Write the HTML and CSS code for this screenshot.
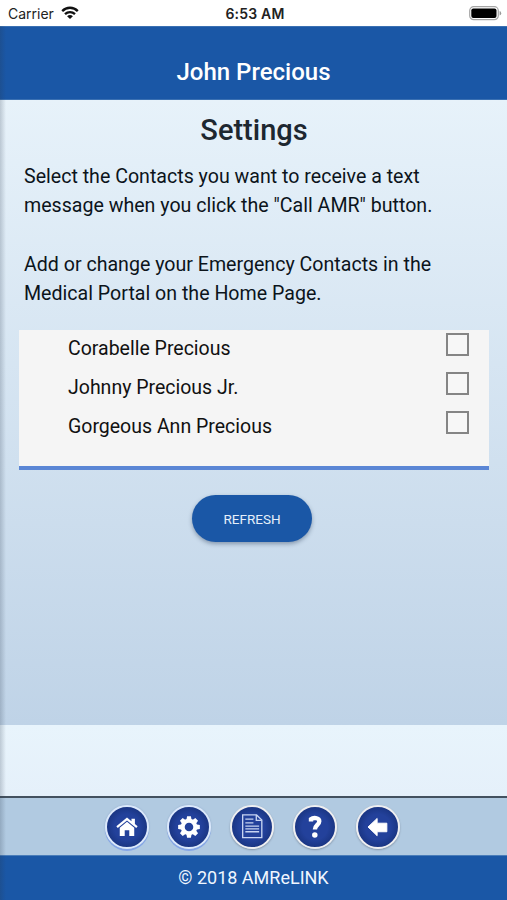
FILE: index.html
```html
<!DOCTYPE html>
<html lang="en">
<head>
<meta charset="utf-8">
<title>Settings</title>
<link rel="stylesheet" href="styles.css">
</head>
<body>
<div class="screen">
  <div class="status">
    <div class="carrier"><span>Carrier</span>
      <svg class="wifi" width="18" height="14" viewBox="0 0 18 14" fill="none" stroke="#111" stroke-width="2.3"><path d="M1.2 5.1C5.6.6 12.4.6 16.8 5.1"/><path d="M4 8.2c2.9-2.8 7.1-2.8 10 0"/><path d="M9 13 6.1 10.2c1.7-1.5 4.1-1.5 5.8 0z" fill="#111" stroke="none"/></svg>
    </div>
    <div class="time">6:53 AM</div>
    <svg class="battery" width="33" height="15" viewBox="0 0 33 15"><rect x=".7" y=".7" width="28.6" height="13" rx="4" fill="#fff" stroke="#a5a5a5" stroke-width="1.2"/><rect x="2.3" y="2.5" width="25.2" height="9.6" rx="2" fill="#000"/><path d="M30.6 5v4.6q1.6-.6 1.6-2.3T30.6 5z" fill="#999"/></svg>
  </div>
  <header class="titlebar"><span>John Precious</span></header>
  <main class="content">
    <h1>Settings</h1>
    <div class="intro">
      <p>Select the Contacts you want to receive a text<br>message when you click the "Call AMR" button.</p>
      <p>Add or change your Emergency Contacts in the<br>Medical Portal on the Home Page.</p>
    </div>
    <div class="contacts">
      <label class="contact"><span>Corabelle Precious</span><input type="checkbox"></label>
      <label class="contact"><span>Johnny Precious Jr.</span><input type="checkbox"></label>
      <label class="contact"><span>Gorgeous Ann Precious</span><input type="checkbox"></label>
    </div>
    <button class="refresh">REFRESH</button>
  </main>
  <div class="spacer"></div>
  <nav class="nav">
    <a class="round blue"><svg viewBox="0 0 42 42"><path fill="#fff" d="M9.8 20.3 21 11l4.7 3.9v-2.6h3.6v5.6l2.9 2.4-1.5 1.8L21 14.1l-9.7 8z"/><path fill="#fff" d="M13.4 21.7 21 15.5l7.6 6.2v8.8h-5.2v-6h-4.8v6h-5.2z"/></svg></a>
    <a class="round blue"><svg viewBox="0 0 42 42"><g fill="#fff" transform="translate(21 21)"><g id="teeth"><path d="M-2.8-7-2-11.4h4L2.8-7zM-2.8 7-2 11.4h4L2.8 7z"/><path transform="rotate(45)" d="M-2.8-7-2-11.4h4L2.8-7zM-2.8 7-2 11.4h4L2.8 7z"/><path transform="rotate(90)" d="M-2.8-7-2-11.4h4L2.8-7zM-2.8 7-2 11.4h4L2.8 7z"/><path transform="rotate(135)" d="M-2.8-7-2-11.4h4L2.8-7zM-2.8 7-2 11.4h4L2.8 7z"/></g><circle r="6.6" fill="none" stroke="#fff" stroke-width="4.2"/></g></svg></a>
    <a class="round"><svg viewBox="0 0 42 42" fill="none" stroke="#c8d4f2" stroke-width="1.4"><path d="M11.2 8.3h14.6l5.5 5.5v18.4H11.2z"/><path d="M25.5 8.5v5.6h5.6M14 12.8h8.5M14 16.7h8.5M14 20h14.5M14 23h14.5M14 26h14.5"/></svg></a>
    <a class="round"><svg viewBox="0 0 42 42" fill="none"><path d="M16.8 15.2v-2.5c2.2-1.8 8.7-1.8 8.7 2.3 0 3.8-4.6 3.9-4.6 8.7" stroke="#fff" stroke-width="4.6"/><circle cx="20.8" cy="29.3" r="2.9" fill="#fff"/></svg></a>
    <a class="round"><svg viewBox="0 0 42 42"><path fill="#fff" stroke="#fff" stroke-linejoin="round" d="m10.5 21 9.6-9v5h10.2v9H20.1v4.2z"/></svg></a>
  </nav>
  <footer class="footer">© 2018 AMReLINK</footer>
  <div class="edge"></div>
</div>
</body>
</html>
```

FILE: styles.css
```css
* { box-sizing: border-box; }
body { margin: 0; font-family: Roboto, sans-serif; }
.screen { position: relative; width: 507px; height: 900px; display: flex; flex-direction: column; overflow: hidden; background: #e8f3fb; }
.status { height: 26px; flex: none; display: grid; grid-template-columns: 1fr auto 1fr; align-items: center; padding: 1px 5px 0 8px; background: #fff; color: #222; font-family: Inter, sans-serif; font-size: 14px; }
.carrier { display: flex; align-items: center; gap: 7px; }
.wifi { margin-top: -2px; }
.time { font-weight: 600; letter-spacing: .2px; }
.battery { justify-self: end; }
.titlebar { height: 74px; flex: none; display: flex; align-items: flex-end; justify-content: center; padding-bottom: 13px; background: #1a57a6; border-top: 1px solid #3a70b2; border-bottom: 1px solid #3a70b2; color: #fff; font-size: 24px; font-weight: 500; line-height: 28px; }
.content { height: 625px; flex: none; display: flex; flex-direction: column; align-items: center; padding: 12px 18px 0 19px; background: linear-gradient(#e7f2fa, #bfd3e7); }
h1 { margin: 0; font-size: 29px; line-height: 36px; font-weight: 500; color: #1d2730; }
.intro { align-self: stretch; padding: 14px 0 0 5px; font-size: 19.6px; line-height: 29.3px; color: #0c141b; white-space: nowrap; }
.intro p { margin: 0 0 29.3px; }
.intro p:last-child { margin-bottom: 0; }
.contacts { align-self: stretch; height: 140px; margin-top: 22px; padding: 0 20px 0 49px; background: #f5f5f5; border-bottom: 4px solid #5b86d5; }
.contact { display: flex; justify-content: space-between; height: 39px; font-size: 19.5px; line-height: 37px; color: #111; }
.contact input { appearance: none; width: 23px; height: 23px; margin: 3px 0 0; border: 2px solid #858585; background: #f7f7f7; }
.refresh { width: 120px; height: 47px; margin: 25px 0 0 -4px; padding: 0; border: 0; border-radius: 24px; background: #1a57a6; color: #e6effa; font: 13.5px Roboto, sans-serif; box-shadow: 0 2px 4px rgba(30, 50, 80, .4); }
.spacer { height: 71px; flex: none; background: linear-gradient(#e8f4fc, #e5f0fa); }
.nav { height: 59px; flex: none; display: flex; justify-content: center; gap: 18.75px; padding: 7px 3px 0 0; border-top: 2px solid #43515f; background: #b1cae1; }
.round { width: 44px; height: 44px; border: 2px solid #eeeef0; border-radius: 50%; background: radial-gradient(#23419b 45%, #122b6e 95%); box-shadow: 0 1px 2px #8393a6; }
.round.blue { border-color: #dbe8fb; box-shadow: 0 2px 0 #84a5e6, 0 0 2px #8fa8cb; }
.round svg { display: block; width: 40px; height: 40px; }
.footer { flex: 1; background: #1a57a6; border-top: 1px solid #4a7db9; color: #f0f6ff; text-align: center; font-size: 18px; line-height: 43px; }
.edge { position: absolute; left: 0; top: 26px; bottom: 0; width: 6px; background: linear-gradient(90deg, rgba(40, 55, 75, .22), rgba(40, 55, 75, 0)); }
```
